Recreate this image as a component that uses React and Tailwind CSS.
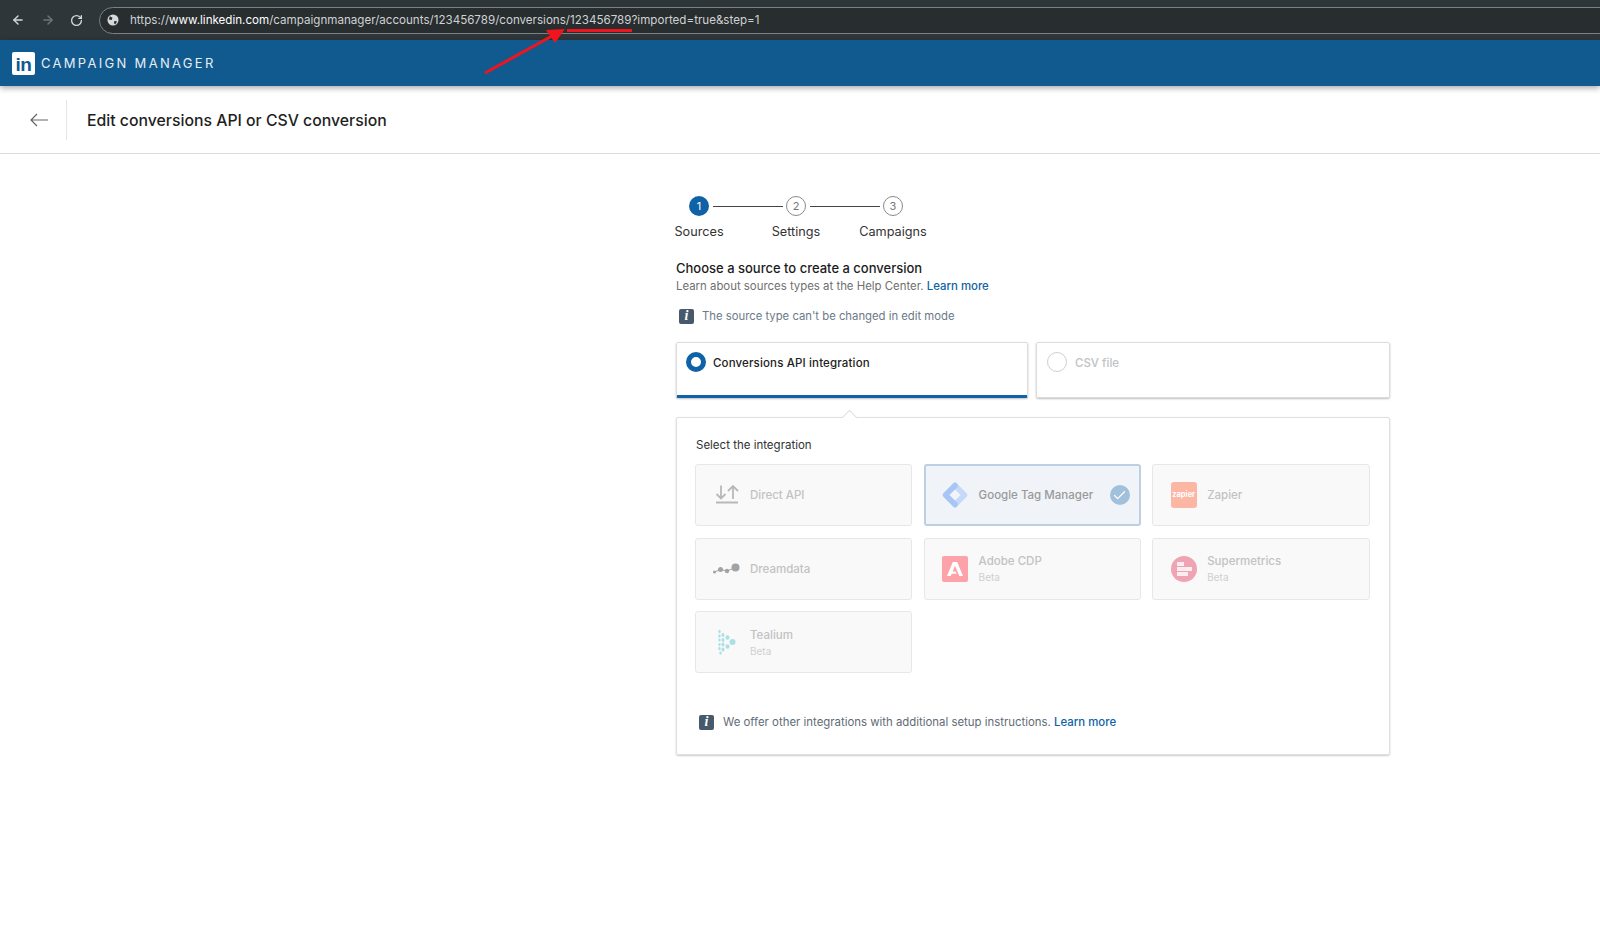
import { ArrowLeft, ArrowRight, RotateCw, Check } from "lucide-react";

const InfoIcon = () => (
  <span className="w-[15px] h-[15px] rounded-[2px] bg-[#47596b] text-white flex items-center justify-center shrink-0 text-[14px] font-bold italic leading-none font-['Liberation_Serif',serif]">
    i
  </span>
);

const DirectIcon = () => (
  <svg width="24" height="20" viewBox="0 0 24 20" fill="none" stroke="#b8b8b8" strokeWidth="1.800">
    <path d="M6 0.500v13M1.500 9 6 13.500 10.500 9M18 14V1M13 6l5-5 5 5" />
    <path d="M1 17.500h22" strokeWidth="2" />
  </svg>
);

const GtmIcon = () => (
  <svg width="26" height="26" viewBox="0 0 26 26" fill="none" strokeWidth="5.500" strokeLinecap="round" strokeLinejoin="round">
    <path d="M13 3.500 22.500 13 13 22.500" stroke="#c6d9f8" />
    <path d="M13 3.500 3.500 13 13 22.500" stroke="#a9c5f5" />
  </svg>
);

const DreamdataIcon = () => (
  <svg width="27" height="12" viewBox="0 0 27 12" fill="#a3a3a3">
    <circle cx="22.500" cy="4.500" r="4" />
    <circle cx="14" cy="8" r="2.200" />
    <circle cx="7.500" cy="6.500" r="2.500" />
    <circle cx="1.500" cy="9" r="1.500" />
    <path d="M1.500 9 7.500 6.500 14 8 22.500 4.500" stroke="#a3a3a3" fill="none" />
  </svg>
);

const AdobeIcon = () => (
  <div className="w-[26px] h-[26px] rounded-[2px] bg-[#fca2a8] flex items-center justify-center">
    <svg width="16" height="14" viewBox="0 0 16 14" fill="#fff">
      <path d="M5.800 0h4.400L16 14h-3.700L8 3.800 5.600 9.500h3l1 2.200H4.700L3.700 14H0Z" />
    </svg>
  </div>
);

const ZapierIcon = () => (
  <div className="w-[26px] h-[26px] rounded-[3px] bg-[#fbb6a4] flex items-center justify-center text-white text-[7.500px] font-bold leading-none">
    zapier
  </div>
);

const SupermetricsIcon = () => (
  <div className="w-[26px] h-[26px] rounded-full bg-[#efa3b3] flex flex-col items-start justify-center gap-[1px] pl-[6px]">
    <span className="block w-[7px] h-[4px] bg-[#fbeef1]" />
    <span className="block w-[15px] h-[4px] bg-[#fbeef1]" />
    <span className="block w-[11px] h-[4px] bg-[#fbeef1]" />
  </div>
);

const TealiumIcon = () => (
  <svg width="18" height="26" viewBox="0 0 18 26" fill="#abe0e6">
    <circle cx="14.500" cy="13" r="3" />
    <ellipse cx="9.500" cy="8.500" rx="2" ry="2.300" />
    <ellipse cx="9.500" cy="17.500" rx="2" ry="2.300" />
    <ellipse cx="5" cy="6" rx="1.500" ry="2" />
    <ellipse cx="5" cy="11" rx="1.500" ry="2" />
    <ellipse cx="5" cy="15.500" rx="1.500" ry="2" />
    <ellipse cx="5" cy="20.500" rx="1.500" ry="2" />
    <ellipse cx="1.500" cy="2.500" rx="1.200" ry="1.800" />
    <ellipse cx="1.500" cy="7" rx="1.200" ry="1.800" />
    <ellipse cx="1.500" cy="11" rx="1.200" ry="1.500" />
    <ellipse cx="1.500" cy="15.500" rx="1.200" ry="1.500" />
    <ellipse cx="1.500" cy="19.500" rx="1.200" ry="1.800" />
    <ellipse cx="2.500" cy="24" rx="1.200" ry="1.800" />
  </svg>
);

const integrations = [
  { name: "Direct API", icon: <DirectIcon /> },
  { name: "Google Tag Manager", icon: <GtmIcon />, selected: true },
  { name: "Zapier", icon: <ZapierIcon /> },
  { name: "Dreamdata", icon: <DreamdataIcon /> },
  { name: "Adobe CDP", icon: <AdobeIcon />, beta: true },
  { name: "Supermetrics", icon: <SupermetricsIcon />, beta: true },
  { name: "Tealium", icon: <TealiumIcon />, beta: true },
];

const Step = ({ n, label, active, line, className }) => (
  <div className={`flex flex-col items-center relative shrink-0 ${className}`}>
    <span
      className={`w-[20px] h-[20px] rounded-full flex items-center justify-center text-[11px] ${
        active ? "bg-[#0f62a5] text-white" : "border border-[#8a8a8a] text-[#777]"
      }`}
    >
      {n}
    </span>
    {line && <span className="absolute top-[10px] left-[calc(50%+14px)] w-[70px] h-px bg-[#444]" />}
    <span className="mt-[7px] text-[12.700px] leading-[18px] text-[#333] whitespace-nowrap">{label}</span>
  </div>
);

const Tile = ({ item }) => (
  <div
    className={`h-[62px] rounded-[3px] flex items-center ${
      item.selected
        ? "bg-[#f0f4f8] border-2 border-[#bdcfe2] pl-[16px] pr-[9px]"
        : "bg-[#f9f9f9] border border-[#e7e7e7] pl-[17px] pr-[10px]"
    }`}
  >
    <div className="w-[27px] flex justify-center shrink-0">{item.icon}</div>
    <div className="ml-[10px] flex-1 min-w-0">
      <div className={`text-[11.500px] font-medium leading-[16px] ${item.selected ? "text-[#9a9a9a]" : "text-[#c2c2c2]"}`}>
        {item.name}
      </div>
      {item.beta && <div className="text-[10px] leading-[13px] mt-[2px] text-[#cfcfcf]">Beta</div>}
    </div>
    {item.selected && (
      <span className="w-[20px] h-[20px] rounded-full bg-[#a0c0dc] flex items-center justify-center shrink-0">
        <Check size={15} color="#fff" strokeWidth={2} />
      </span>
    )}
  </div>
);

export default function App() {
  return (
    <div className="relative h-[951px] overflow-hidden bg-white font-['Inter',sans-serif]">
      {/* browser chrome */}
      <div className="h-[40px] bg-[#2f3639] flex items-center pl-[11px]">
        <ArrowLeft size={14} color="#d6d9da" strokeWidth={2.400} />
        <ArrowRight size={14} color="#6f7578" strokeWidth={2.400} className="ml-[16px]" />
        <RotateCw size={13} color="#d6d9da" strokeWidth={2.400} className="ml-[15px]" />
        <div className="ml-[16px] flex-1 h-[27px] -mr-[20px] rounded-full border border-[#7b8183] bg-[#282d30] flex items-center pl-[7px]">
          <svg width="12" height="12" viewBox="0 0 13 13">
            <circle cx="6.500" cy="6.500" r="6" fill="#d6d9da" />
            <path d="M3 2.500 6 4 5 6.500 2 6ZM8 7.500l3 .5-2 3-1.500-1Z" fill="#282d30" />
          </svg>
          <span className="ml-[11px] mt-[1px] text-[11.600px] leading-none text-[#cfd2d3] whitespace-nowrap">
            https://<span className="text-white">www.linkedin.com</span>/campaignmanager/accounts/123456789/conversions/123456789?imported=true&amp;step=1
          </span>
        </div>
      </div>

      {/* app bar */}
      <div className="h-[46px] bg-[#115a8f] flex items-center pl-[12px] shadow-[0_2px_6px_rgba(0,0,0,0.35)] relative">
        <div className="w-[23px] h-[23px] bg-white rounded-[2px] flex items-center justify-center text-[#115a8f] text-[19px] font-bold leading-none pt-[2px] tracking-[-0.5px] font-['Liberation_Sans',sans-serif]">
          in
        </div>
        <span className="ml-[6px] mt-[1px] text-[13px] tracking-[2.300px] text-[#e6eef4]">CAMPAIGN MANAGER</span>
      </div>

      {/* page title */}
      <div className="h-[68px] border-b border-[#dcdcdc] flex items-center">
        <div className="w-[67px] h-[40px] border-r border-[#e5e5e5] flex items-center pl-[30px]">
          <svg width="18" height="14" viewBox="0 0 18 14" fill="none" stroke="#666" strokeWidth="1.200">
            <path d="M18 7H1M7 1 1 7l6 6" />
          </svg>
        </div>
        <h1 className="ml-[20px] mt-[3px] text-[15.800px] font-medium text-[#1f1f1f]">Edit conversions API or CSV conversion</h1>
      </div>

      {/* main column */}
      <div className="ml-[676px] w-[714px]">
        <div className="mt-[42px] -ml-[1px] flex">
          <Step n={1} label="Sources" active line className="w-[48px]" />
          <Step n={2} label="Settings" line className="w-[50px] ml-[48px]" />
          <Step n={3} label="Campaigns" className="w-[68px] ml-[38px]" />
        </div>

        <h2 className="mt-[18px] text-[13px] font-medium leading-[18px] text-[#1c1c1c]">Choose a source to create a conversion</h2>
        <p className="mt-[1px] text-[11.400px] leading-[16px] text-[#6f6f6f]">
          Learn about sources types at the Help Center.{" "}
          <span className="text-[#0f62a5] font-medium">Learn more</span>
        </p>

        <div className="mt-[14px] ml-[3px] flex items-center gap-[8px]">
          <InfoIcon />
          <span className="text-[11.300px] leading-[16px] text-[#6b7a88]">The source type can't be changed in edit mode</span>
        </div>

        {/* source cards */}
        <div className="mt-[18px] grid grid-cols-[352px_354px] gap-x-[8px]">
          <div className="h-[56px] rounded-[2px] border border-[#dcdcdc] border-b-[3px] border-b-[#0f62a5] shadow-[0_1px_2px_rgba(0,0,0,0.25)] flex items-start pt-[9px] pl-[9px]">
            <span className="w-[20px] h-[20px] rounded-full border-[5px] border-[#0f62a5] bg-white" />
            <span className="ml-[7px] mt-[3px] text-[11.500px] font-medium leading-[16px] tracking-[0.15px] text-[#222]">Conversions API integration</span>
          </div>
          <div className="h-[56px] rounded-[2px] border border-[#dcdcdc] shadow-[0_1px_2px_rgba(0,0,0,0.25)] flex items-start pt-[9px] pl-[10px]">
            <span className="w-[20px] h-[20px] rounded-full border border-[#cfcfcf] bg-white" />
            <span className="ml-[8px] mt-[3px] text-[11.500px] font-medium leading-[16px] text-[#c2c2c2]">CSV file</span>
          </div>
        </div>

        {/* integrations panel */}
        <div className="relative mt-[19px] h-[338px] rounded-[2px] border border-[#dfdfdf] shadow-[0_1px_2px_rgba(0,0,0,0.2)] pt-[19px] px-[19px]">
          <span className="absolute -top-[6px] left-[167px] w-[11px] h-[11px] rotate-45 bg-white border-l border-t border-[#dfdfdf]" />
          <div className="text-[11.500px] leading-[16px] text-[#333]">Select the integration</div>
          <div className="mt-[11px] -ml-[1px] grid grid-cols-[217px_217px_218px] gap-x-[11.600px] gap-y-[11.500px]">
            {integrations.map((item) => (
              <Tile key={item.name} item={item} />
            ))}
          </div>
          <div className="mt-[41px] ml-[3px] flex items-center gap-[9px]">
            <InfoIcon />
            <span className="text-[11.400px] leading-[16px] text-[#5f6b76]">
              We offer other integrations with additional setup instructions.{" "}
              <span className="text-[#0f62a5] font-medium">Learn more</span>
            </span>
          </div>
        </div>
      </div>

      {/* red annotation over the screenshot */}
      <svg className="absolute left-0 top-0 pointer-events-none" width="700" height="80" viewBox="0 0 700 80">
        <path d="M567 30.500h65" stroke="#f0141e" strokeWidth="3" />
        <path d="M485 73 552 36" stroke="#f0141e" strokeWidth="3" />
        <path d="M565 29 546 30 555 43Z" fill="#f0141e" />
      </svg>
    </div>
  );
}
